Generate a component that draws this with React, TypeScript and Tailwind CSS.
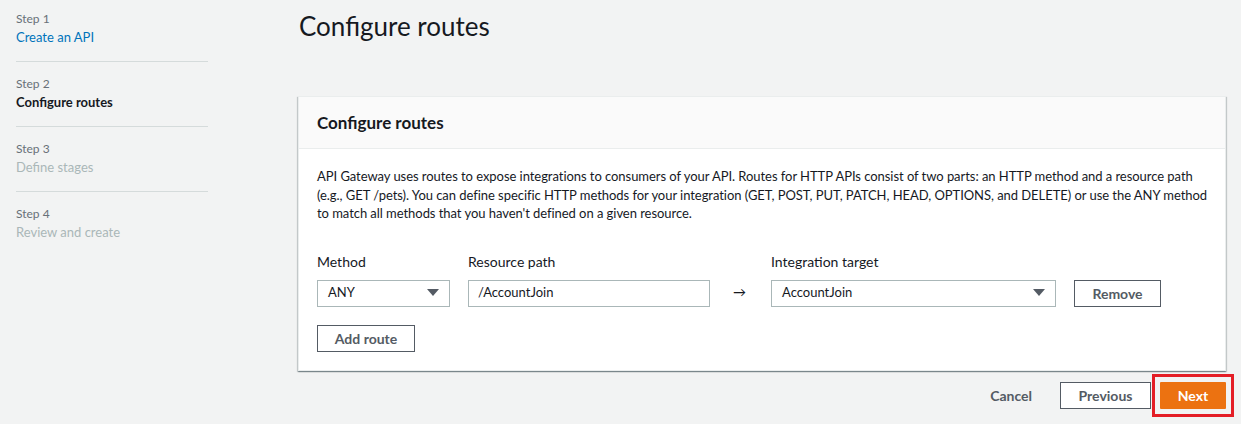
import React from 'react';

const font = { fontFamily: 'Lato, "Open Sans", Arial, sans-serif' };

const steps = [
  { n: 'Step 1', label: 'Create an API', state: 'link' },
  { n: 'Step 2', label: 'Configure routes', state: 'active' },
  { n: 'Step 3', label: 'Define stages', state: 'off' },
  { n: 'Step 4', label: 'Review and create', state: 'off' },
];

const Caret = () => (
  <svg width="12" height="8" viewBox="0 0 12 8" className="shrink-0">
    <path d="M0 0 L12 0 L6 7 Z" fill="#545b64" />
  </svg>
);

export default function App() {
  return (
    <div className="w-[1241px] h-[424px] bg-[#f2f3f3] flex text-[#16191f] overflow-hidden" style={font}>
      {/* wizard steps */}
      <nav className="w-[298px] shrink-0 pl-4 pt-[10px]">
        <ul className="w-[192px]">
          {steps.map((s, i) => (
            <li key={s.n} className={`pb-[15px] ${i < steps.length - 1 ? 'border-b border-[#d5dbdb] mb-[13px]' : ''}`}>
              <div className="text-[12px] leading-[18px] text-[#687078]">{s.n}</div>
              <div
                className={`text-[13px] leading-[18px] ${
                  s.state === 'link' ? 'text-[#0073bb]' : s.state === 'active' ? 'font-bold text-[#16191f]' : 'text-[#aab7b8]'
                }`}
              >
                {s.label}
              </div>
            </li>
          ))}
        </ul>
      </nav>

      {/* main */}
      <main className="flex-1 pr-[15px]">
        <h1 className="text-[26px] leading-[32px] font-normal text-[#16191f] mt-[10px] mb-[54px] pl-[1px]">Configure routes</h1>

        <section className="bg-white border border-[#eaeded] shadow-[0_1px_1px_0_rgba(0,28,36,0.3),1px_1px_1px_0_rgba(0,28,36,0.15),-1px_1px_1px_0_rgba(0,28,36,0.15)]">
          <div className="bg-[#fafafa] border-b border-[#eaeded] h-[52px] flex items-center px-[18px]">
            <h2 className="text-[17px] font-bold leading-[22px]">Configure routes</h2>
          </div>
          <div className="pl-[18px] pr-[12px] pt-[18px] pb-[18px]">
            <p className="text-[13px] leading-[18.5px] tracking-[-0.05px] text-[#16191f]">
              API Gateway uses routes to expose integrations to consumers of your API. Routes for HTTP APIs consist of two parts: an HTTP method and a resource path (e.g., GET /pets). You can define specific HTTP methods for your integration (GET, POST, PUT, PATCH, HEAD, OPTIONS, and DELETE) or use the ANY method to match all methods that you haven't defined on a given resource.
            </p>

            <div className="flex items-end mt-[29px] text-[14px]">
              <div className="w-[133px]">
                <div className="leading-[20px] mb-[8px]">Method</div>
                <div className="h-[27px] border border-[#aab7b8] flex items-center justify-between pl-[10px] pr-[10px] text-[13px]">
                  <span>ANY</span>
                  <Caret />
                </div>
              </div>
              <div className="w-[242px] ml-[18px]">
                <div className="leading-[20px] mb-[8px]">Resource path</div>
                <div className="h-[27px] border border-[#aab7b8] flex items-center pl-[9px] text-[13px]">/AccountJoin</div>
              </div>
              <div className="w-[61px] h-[27px] flex items-center justify-center text-[13px] pr-[2px]">→</div>
              <div className="w-[285px]">
                <div className="leading-[20px] mb-[8px]">Integration target</div>
                <div className="h-[27px] border border-[#aab7b8] flex items-center justify-between pl-[10px] pr-[10px] text-[13px]">
                  <span>AccountJoin</span>
                  <Caret />
                </div>
              </div>
              <button className="ml-[18px] w-[87px] h-[27px] border border-[#545b64] font-bold text-[#545b64] bg-white">
                Remove
              </button>
            </div>

            <button className="mt-[18px] w-[98px] h-[27px] border border-[#545b64] text-[14px] font-bold text-[#545b64] bg-white">
              Add route
            </button>
          </div>
        </section>

        <div className="flex items-center justify-end mt-[3px] text-[14px]">
          <button className="font-bold text-[#545b64] mr-[28px]">Cancel</button>
          <button className="w-[91px] h-[27px] border border-[#545b64] bg-white font-bold text-[#545b64] mr-[1px]">
            Previous
          </button>
          <div className="border-[3px] border-[#e41e26] px-[5px] py-[5px] -mr-[8px]">
            <button className="w-[66px] h-[27px] bg-[#ec7211] text-white font-bold rounded-[1px]">Next</button>
          </div>
        </div>
      </main>
    </div>
  );
}
